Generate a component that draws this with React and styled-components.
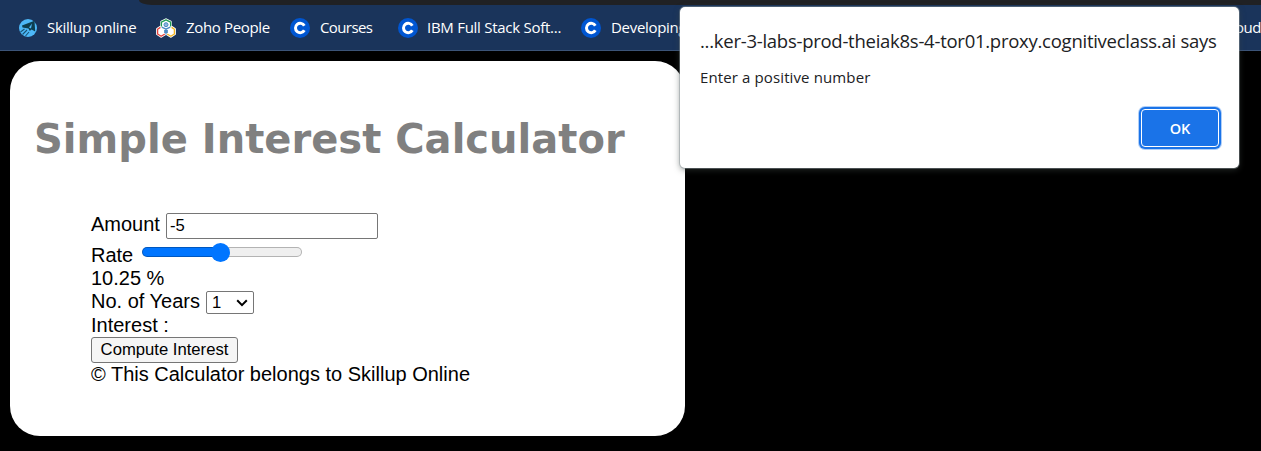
import React from 'react';
import styled, { createGlobalStyle } from 'styled-components';

const Global = createGlobalStyle`
  * { box-sizing: border-box; }
  body { margin: 0; background: #000; overflow: hidden; }
`;

const Page = styled.div`
  position: relative;
  width: 1261px;
  height: 451px;
  overflow: hidden;
  background: #000;
  font-family: "Liberation Sans", Arial, sans-serif;
  color: #000;
`;

const BrowserChrome = styled.header`
  height: 51px;
  background: #202124;
`;

const TabStrip = styled.div`
  display: flex;
  height: 5px;
  background: #1a345b;
  padding-left: 139px;
`;

const TabStripEdge = styled.div`
  flex: 1;
  background: #202124;
  border-bottom-left-radius: 13px 5px;
`;

const Bookmarks = styled.nav`
  display: flex;
  align-items: center;
  height: 46px;
  background: #1a345b;
  border-bottom: 1px solid #3c5478;
  padding-left: 18px;
`;

const Bookmark = styled.div`
  display: flex;
  flex: none;
  align-items: center;
  gap: ${(p) => p.$gap}px;
  width: ${(p) => p.$width}px;
  svg { display: block; flex: none; }
`;

const BookmarkLabel = styled.span`
  padding-bottom: 2px;
  font: 15px/20px "Open Sans", "Noto Sans", sans-serif;
  letter-spacing: ${(p) => p.$track}px;
  color: #fff;
  white-space: nowrap;
`;

const Card = styled.main`
  width: 675px;
  height: 375px;
  margin: 10px 0 0 10px;
  padding: 54px 24px 0;
  border-radius: 30px;
  background: #fff;
`;

const Title = styled.h1`
  margin: 0;
  font: bold 40px/49px "DejaVu Sans", Verdana, sans-serif;
  letter-spacing: 0.02px;
  color: #808080;
  white-space: nowrap;
`;

const Form = styled.div`
  padding: 49px 0 0 57px;
  font-size: 20px;
  line-height: 23px;
`;

const Row = styled.div`
  display: flex;
  align-items: flex-start;
  height: ${(p) => p.$height}px;
  white-space: nowrap;
`;

const AmountInput = styled.input`
  width: 212px;
  height: 26px;
  margin-left: 6px;
  padding: 1px 3px;
  border: 1px solid #767676;
  border-radius: 2px;
  outline: none;
  background: #fff;
  color: #000;
  font: 16.67px "Liberation Sans", Arial, sans-serif;
`;

const Slider = styled.input`
  appearance: none;
  width: 160px;
  height: 20px;
  margin: -2px 0 0 9px;
  background: transparent;
  &::-webkit-slider-runnable-track {
    height: 10px;
    border: 1px solid rgba(0, 0, 0, 0.25);
    border-radius: 5px;
    background: linear-gradient(90deg, #0075ff 78px, #efefef 78px) border-box;
  }
  &::-webkit-slider-thumb {
    appearance: none;
    width: 19px;
    height: 19px;
    margin-top: -5.5px;
    border-radius: 50%;
    background: #0075ff;
  }
`;

const YearsSelect = styled.div`
  display: flex;
  align-items: center;
  justify-content: space-between;
  width: 48px;
  height: 23px;
  margin-top: 1px;
  margin-left: 6px;
  padding: 0 5px 0 5px;
  border: 1px solid #767676;
  border-radius: 2px;
  font-size: 16.67px;
`;

const ComputeButton = styled.button`
  width: 147px;
  height: 26px;
  padding: 0;
  border: 1px solid #767676;
  border-radius: 3px;
  background: #f5f5f5;
  color: #000;
  font: 16.67px "Liberation Sans", Arial, sans-serif;
`;

const Dialog = styled.section`
  position: absolute;
  left: 680px;
  top: 7px;
  display: flex;
  flex-direction: column;
  width: 559px;
  height: 161px;
  padding: 21px 19px 19px 20px;
  border-radius: 5px;
  background: #fff;
  box-shadow: 0 0 0 1px rgba(140, 150, 155, 0.45), 0 2px 6px rgba(60, 70, 66, 0.55);
  color: #202124;
  font-family: "Open Sans", "Noto Sans", sans-serif;
`;

const DialogTitle = styled.div`
  font-size: 18.5px;
  line-height: 26px;
  letter-spacing: -0.26px;
  white-space: nowrap;
`;

const DialogMessage = styled.div`
  margin-top: 13px;
  font-size: 15px;
  line-height: 20px;
  letter-spacing: 0.12px;
`;

const OkButton = styled.button`
  align-self: flex-end;
  width: 78px;
  height: 38px;
  margin: auto 1px 2px 0;
  padding: 0;
  border: 1px solid #fff;
  border-radius: 4px;
  background: #1a73e8;
  box-shadow: 0 0 0 2px #1a73e8, 0 0 0 3px rgba(26, 115, 232, 0.35);
  color: #fff;
  font: 600 14.5px "Open Sans", sans-serif;
`;

const SkillupIcon = () => (
  <svg width="20" height="20" viewBox="0 0 20 20">
    <circle cx="10" cy="10" r="9" fill="#4db8f8" />
    <path d="M4 7.5 16.5 2.8 17.2 13.5 13.5 11.5 11.8 13 10.5 10.5 4.5 9.5Z" fill="#0d3f50" />
    <path d="M11 9.5 14 5.5 13 10.5Z" fill="#4db8f8" />
    <path d="M2.5 14 6.5 11M4.5 16.5 9 12M7.5 18 11 14" stroke="#1a5272" strokeWidth="1.1" />
  </svg>
);

const ZohoIcon = () => (
  <svg width="20" height="20" viewBox="0 0 20 20">
    <g fill="#fff" stroke="#fff" strokeWidth="2.6" strokeLinejoin="round">
      <path d="M10 1.6 14.5 4V9L10 11.4 5.5 9V4Z" />
      <path d="M5.2 8.5 9.3 11V16L5.2 18.4 1.4 16V11Z" />
      <path d="M14.8 8.5 18.6 11V16L14.8 18.4 10.7 16V11Z" />
    </g>
    <g fill="none" strokeWidth="1.3" strokeLinejoin="round">
      <path d="M5.4 8.6V4.2L10 1.8 14.6 4.2V8.6" stroke="#219c55" />
      <path d="M4.4 9.4 1.6 11.3V16L5.2 18.2 8.8 16" stroke="#e3403c" />
      <path d="M15.6 9.4 18.4 11.3V16L14.8 18.2 11.2 16" stroke="#f3b51f" />
      <path d="M5.8 9.2 10 11.2 14.2 9.2M10 11V16.5M8.8 12V15M11.2 12V15" stroke="#4a8ac4" />
    </g>
    <circle cx="10" cy="6.7" r="2" fill="#8fb6dc" stroke="#4a8ac4" />
  </svg>
);

const CourseraIcon = () => (
  <svg width="20" height="20" viewBox="0 0 20 20">
    <circle cx="10" cy="10" r="10" fill="#0056d2" />
    <path d="M14.3 7.7A4.7 4.7 0 1 0 14.3 12.3" fill="none" stroke="#fff" strokeWidth="3" />
  </svg>
);

const ChevronIcon = () => (
  <svg width="12" height="8" viewBox="0 0 12 8">
    <path d="M1.2 1.3 6 6.1 10.8 1.3" fill="none" stroke="#000" strokeWidth="2" />
  </svg>
);

const bookmarks = [
  { icon: SkillupIcon, label: 'Skillup online', width: 138, gap: 9, track: -0.27 },
  { icon: ZohoIcon, label: 'Zoho People', width: 134, gap: 10, track: -0.35 },
  { icon: CourseraIcon, label: 'Courses', width: 108, gap: 10, track: -0.6 },
  { icon: CourseraIcon, label: 'IBM Full Stack Soft...', width: 183, gap: 9, track: -0.27 },
  { icon: CourseraIcon, label: 'Developing', width: 654, gap: 10, track: -0.3 },
];

export default function App() {
  return (
    <Page>
      <Global />
      <BrowserChrome>
        <TabStrip>
          <TabStripEdge />
        </TabStrip>
        <Bookmarks>
          {bookmarks.map(({ icon: Icon, label, width, gap, track }) => (
            <Bookmark key={label} $width={width} $gap={gap}>
              <Icon />
              <BookmarkLabel $track={track}>{label}</BookmarkLabel>
            </Bookmark>
          ))}
          <BookmarkLabel $track={-0.5}>oud</BookmarkLabel>
        </Bookmarks>
      </BrowserChrome>
      <Card>
        <Title>Simple Interest Calculator</Title>
        <Form>
          <Row $height={31}>
            <span>Amount</span>
            <AmountInput defaultValue="-5" />
          </Row>
          <Row $height={23}>
            <span>Rate</span>
            <Slider type="range" min="1" max="20" step="0.25" defaultValue="10.25" />
          </Row>
          <Row $height={23}>10.25 %</Row>
          <Row $height={24}>
            <span>No. of Years</span>
            <YearsSelect>
              1<ChevronIcon />
            </YearsSelect>
          </Row>
          <Row $height={23}>Interest :</Row>
          <Row $height={26}>
            <ComputeButton>Compute Interest</ComputeButton>
          </Row>
          <Row $height={23}>© This Calculator belongs to Skillup Online</Row>
        </Form>
      </Card>
      <Dialog>
        <DialogTitle>...ker-3-labs-prod-theiak8s-4-tor01.proxy.cognitiveclass.ai says</DialogTitle>
        <DialogMessage>Enter a positive number</DialogMessage>
        <OkButton>OK</OkButton>
      </Dialog>
    </Page>
  );
}
